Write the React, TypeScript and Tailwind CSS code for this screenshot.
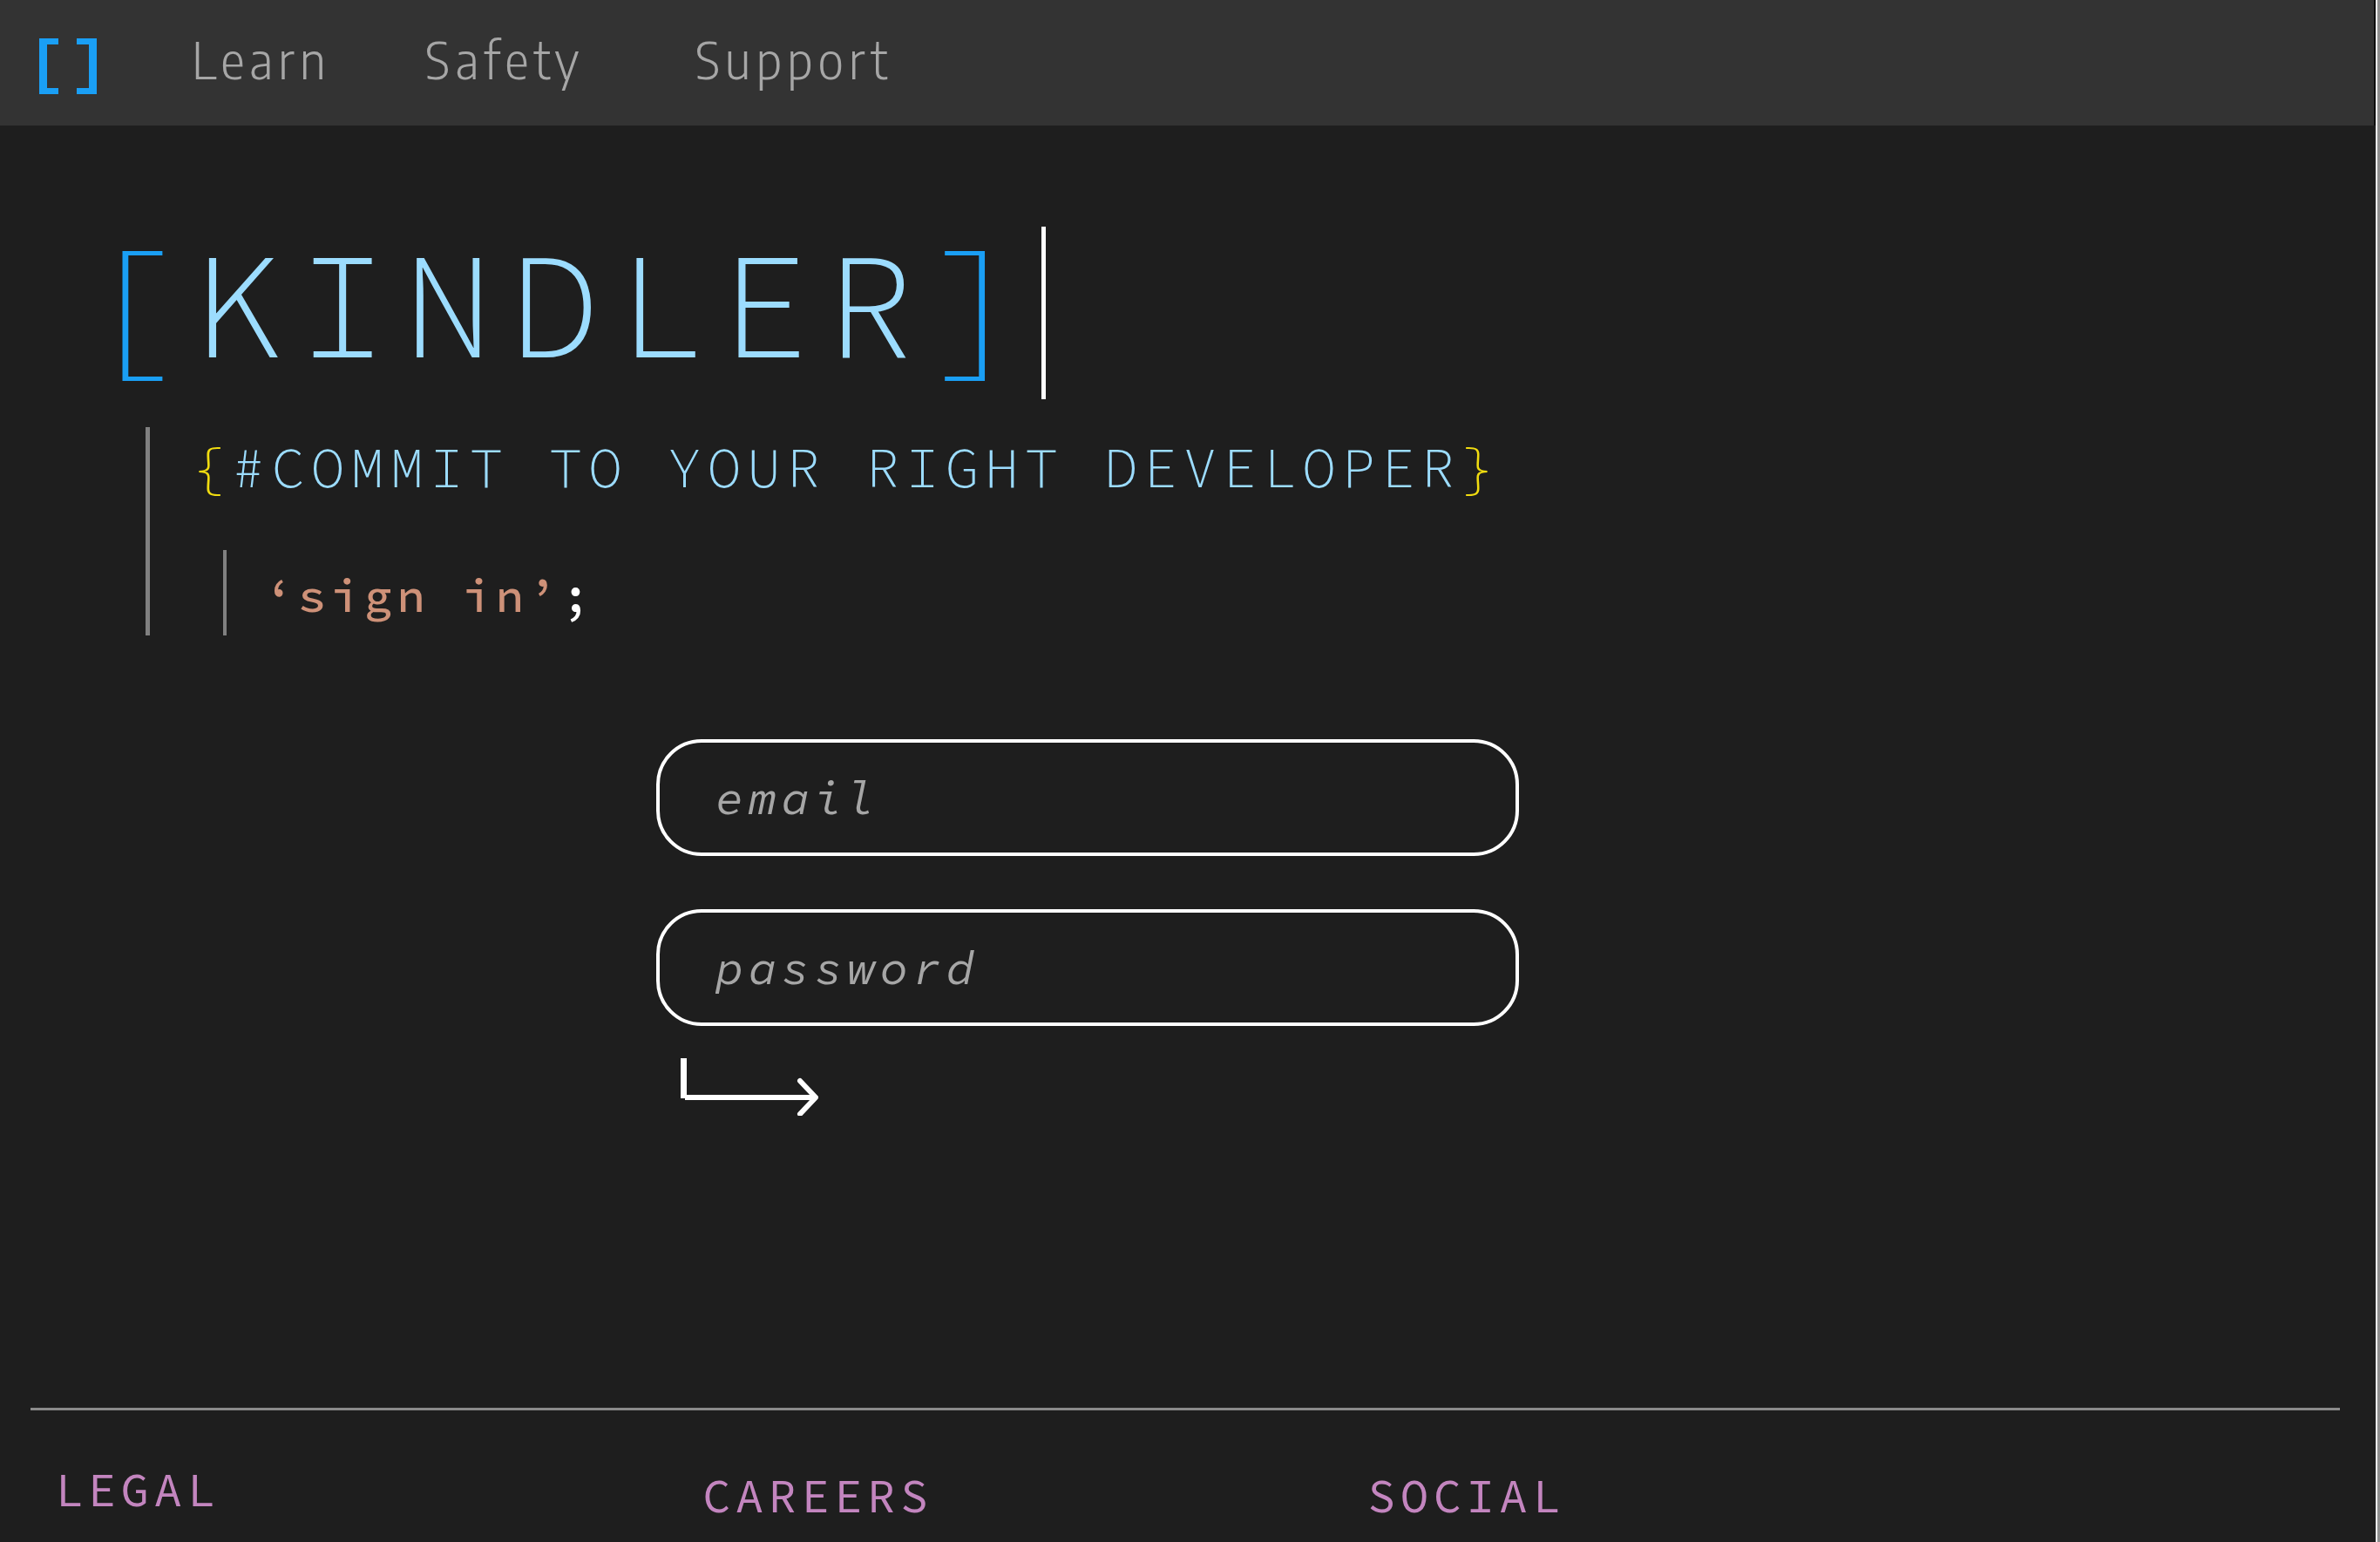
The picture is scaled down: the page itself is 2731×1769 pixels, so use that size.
const navLinks = [
  { label: 'Learn', width: 'w-[268px]' },
  { label: 'Safety', width: 'w-[310px]' },
  { label: 'Support', width: 'w-auto' },
];

function Logo() {
  return (
    <svg viewBox="0 0 66 64" className="h-16 w-[66px]" fill="#1a9ff5" aria-hidden="true">
      <path d="M0 0h22v7H9v50h13v7H0z" />
      <path d="M66 0H43v7h14v50H43v7h23z" />
    </svg>
  );
}

function Header() {
  return (
    <header className="flex h-36 items-center border-r-2 border-[#0c0c0c] bg-[#333333] pl-[45px]">
      <a href="#" aria-label="Kindler home" className="mt-2 mr-[109px]">
        <Logo />
      </a>
      <nav className="mb-2 flex font-['Encode_Sans_Semi_Condensed','Encode_Sans','Open_Sans',sans-serif] text-[58px] leading-[72px] font-light tracking-widest text-[#a6a6a6]">
        {navLinks.map((link) => (
          <a key={link.label} href="#" className={link.width}>
            {link.label}
          </a>
        ))}
      </nav>
    </header>
  );
}

function Hero() {
  return (
    <section className="pt-29 pl-[99px]">
      <div className="flex">
        <h1 className="text-[173px] leading-[178px] font-light tracking-widest text-[#9cdcfe]">
          <span className="text-[#1a9ff5]">[</span>KINDLER<span className="text-[#1a9ff5]">]</span>
        </h1>
        <div className="ml-1.5 h-[198px] w-[5px] bg-white" />
      </div>
      <div className="mt-8 ml-[68px] border-l-[5px] border-[#808080] pl-12">
        <p className="text-[65px] leading-[92px] font-light tracking-widest text-[#9cdcfe]">
          <span className="text-[#f1dc10]">{'{'}</span>#COMMIT TO YOUR RIGHT DEVELOPER
          <span className="text-[#f1dc10]">{'}'}</span>
        </p>
        <h2 className="mt-[49px] ml-9 border-l-4 border-[#808080] pt-1.5 pl-11 text-[54px] leading-[92px] font-medium tracking-widest text-[#ce9178]">
          ‘sign in’<span className="text-white">;</span>
        </h2>
      </div>
    </section>
  );
}

const fieldClass =
  'h-[134px] w-full rounded-[52px] border-4 border-white bg-transparent px-16 text-[54px] tracking-widest text-white italic outline-none placeholder:text-[#a6a6a6]';

function SignInForm() {
  return (
    <form className="mt-[119px] ml-[753px] flex max-w-[990px] flex-col" onSubmit={(e) => e.preventDefault()}>
      <input type="email" aria-label="email" placeholder="email" className={fieldClass} />
      <input type="password" aria-label="password" placeholder="password" className={`${fieldClass} mt-[61px]`} />
      <button type="submit" aria-label="Sign in" className="mt-[37px] ml-7 self-start">
        <svg viewBox="0 0 158 66" className="h-[66px] w-[158px]" fill="none" stroke="#fff">
          <path d="M3.5 0v46" strokeWidth="7" />
          <path d="M5 45h149" strokeWidth="6" />
          <path d="M137 26l18 19-18 19" strokeWidth="6" strokeLinecap="round" strokeLinejoin="round" />
        </svg>
      </button>
    </form>
  );
}

function Footer() {
  return (
    <footer className="mt-auto mr-[41px] ml-[35px] flex h-[154px] border-t-3 border-[#8a8a8a] text-[54px] leading-[70px] tracking-widest text-[#c385bf]">
      <a href="#" className="mt-[56px] w-[743px] pl-7">
        LEGAL
      </a>
      <a href="#" className="mt-[63px] w-[763px] pl-7">
        CAREERS
      </a>
      <a href="#" className="mt-[63px] pl-7">
        SOCIAL
      </a>
    </footer>
  );
}

export default function App() {
  return (
    <div className="min-h-screen border-r-3 border-[#8f8f8f] bg-[#1e1e1e] font-['Source_Code_Pro','Liberation_Mono',monospace]">
      <div className="flex min-h-screen flex-col border-r-2 border-[#f4f4f4]">
        <Header />
        <main>
          <Hero />
          <SignInForm />
        </main>
        <Footer />
      </div>
    </div>
  );
}
